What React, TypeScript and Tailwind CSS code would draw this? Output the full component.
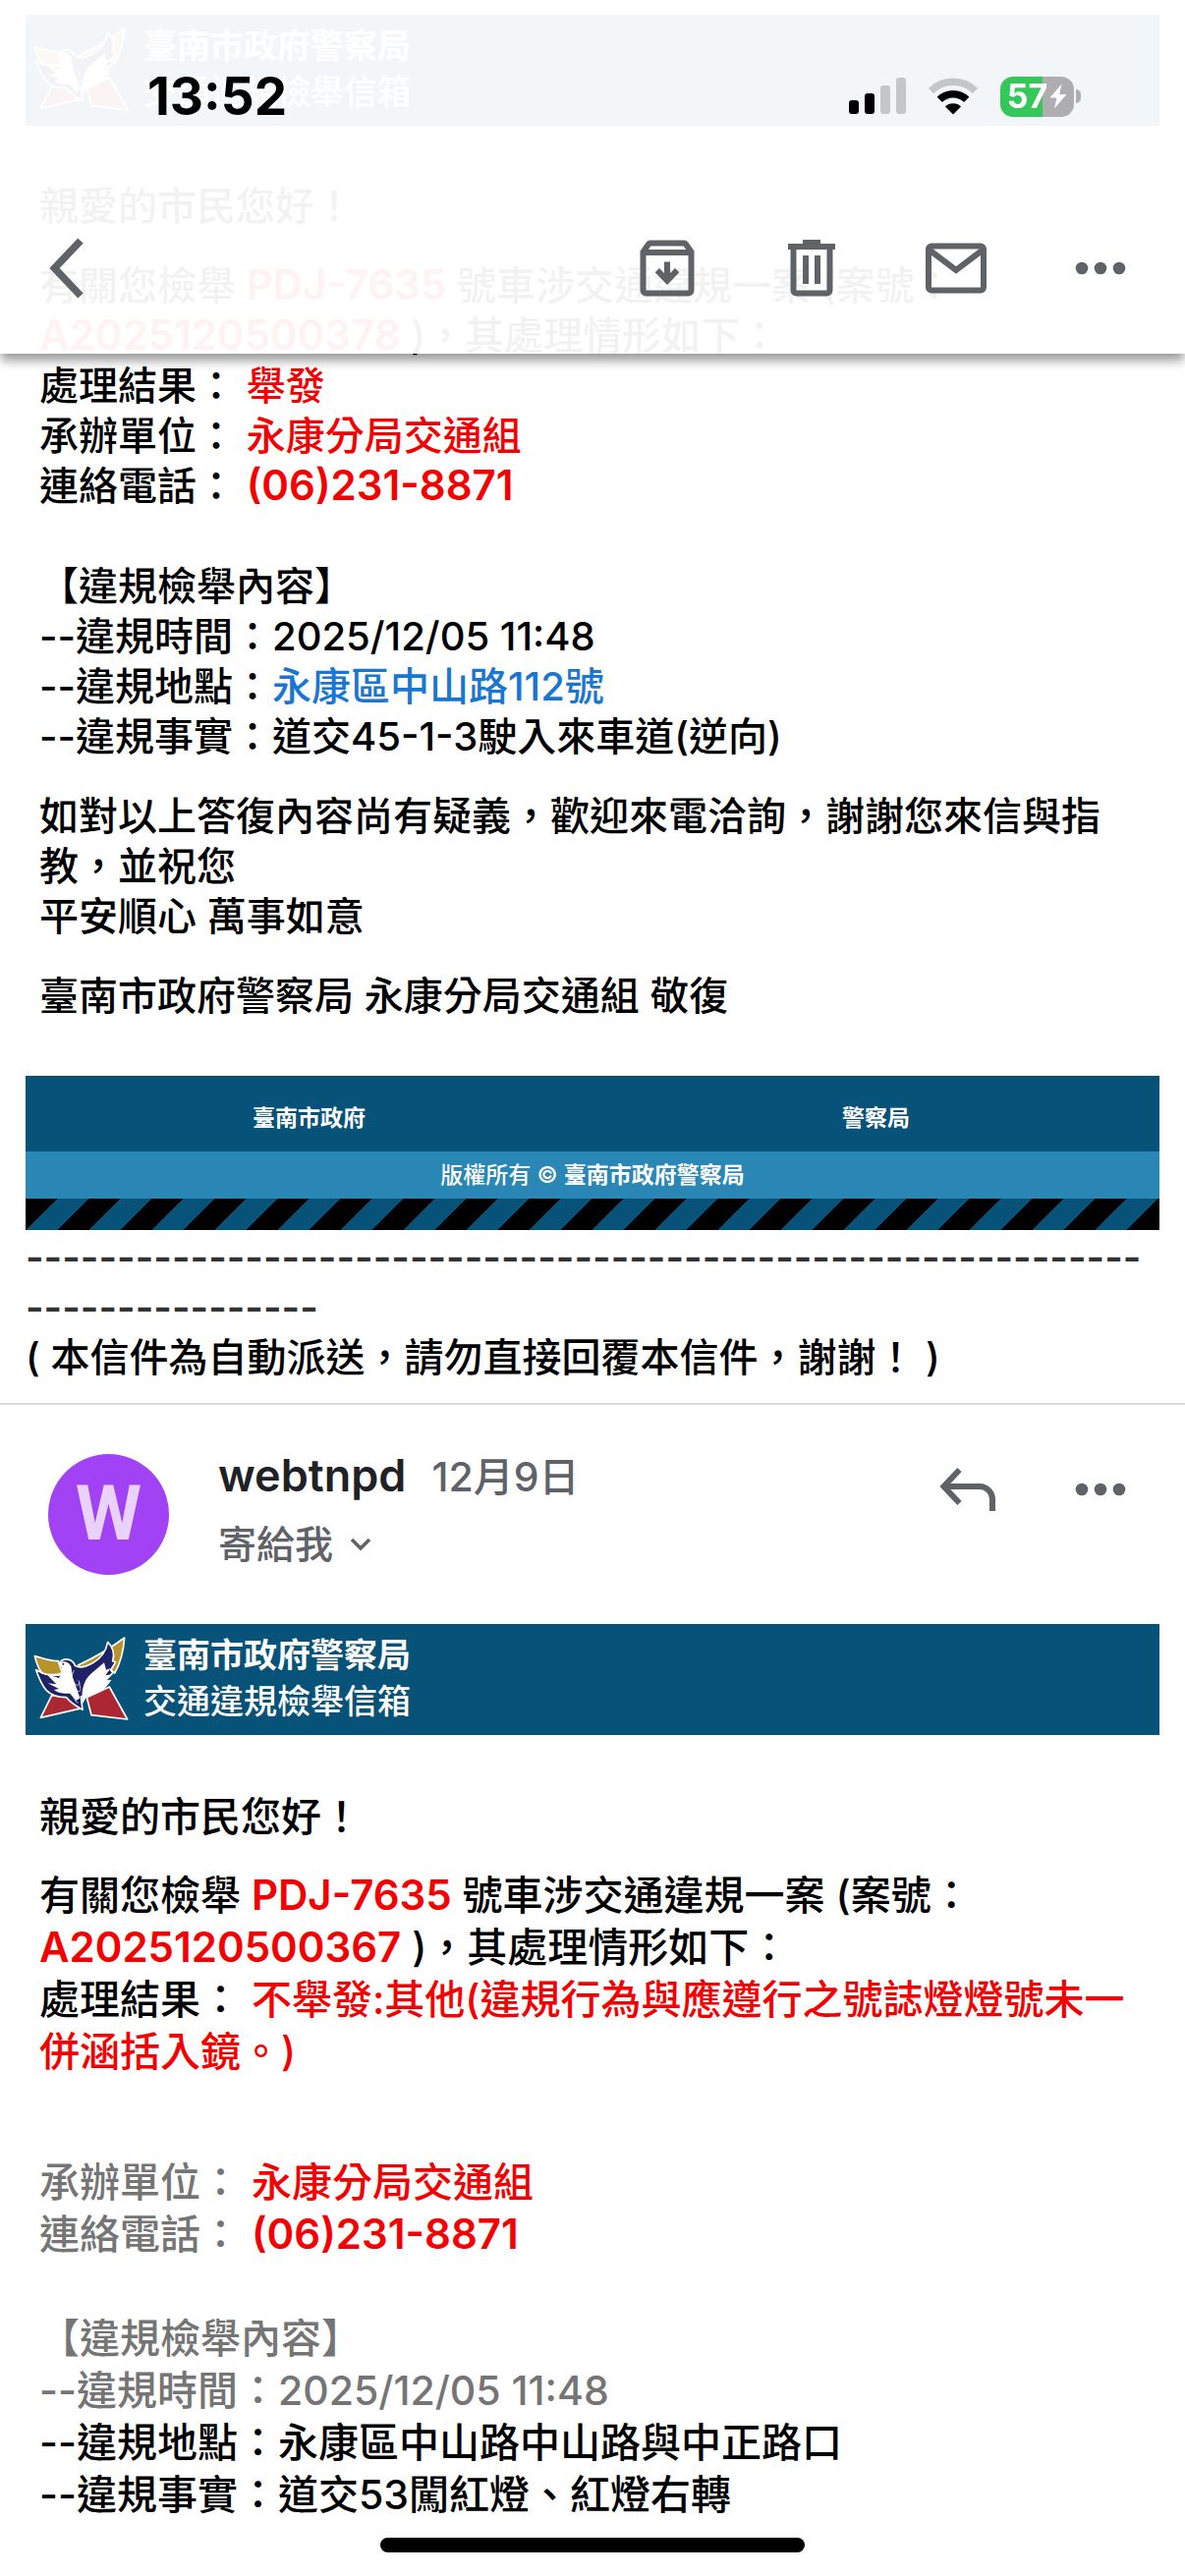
import React from "react";

const font = "font-['Inter','Noto_Sans_CJK_TC',sans-serif]";

const SignalIcon = () => (
  <svg width="58" height="38" viewBox="0 0 58 38" aria-hidden="true">
    <rect x="0" y="23" width="10" height="14" rx="3" fill="#000" />
    <rect x="16" y="16" width="10" height="21" rx="3" fill="#000" />
    <rect x="32" y="8" width="10" height="29" rx="3" fill="#c5c6c8" />
    <rect x="48" y="0" width="10" height="37" rx="3" fill="#c5c6c8" />
  </svg>
);

const WifiIcon = () => (
  <svg width="52" height="38" viewBox="0 0 52 38" aria-hidden="true">
    <path d="M3.5 13.5a32 32 0 0 1 45 0" fill="none" stroke="#c5c6c8" strokeWidth="7.5" />
    <path d="M12.3 22.3a19.5 19.5 0 0 1 27.4 0" fill="none" stroke="#000" strokeWidth="7.5" />
    <path d="M26 37.5 18 29.4a11.5 11.5 0 0 1 16 0Z" fill="#000" />
  </svg>
);

const Battery = () => (
  <div className="flex items-center gap-[2px]">
    <div className="flex h-[41px] w-[75px] items-center justify-center gap-[2px] rounded-[13px] bg-[linear-gradient(90deg,#34c759_57%,#aeaeb0_57%)] text-white">
      <span className="text-[34px] leading-none font-bold">57</span>
      <svg width="18" height="26" viewBox="0 0 18 26" aria-hidden="true">
        <path d="M12.5.5.5 14.5h7L5 25.5 17.5 11h-7.3Z" fill="#fff" />
      </svg>
    </div>
    <div className="h-[14px] w-[5px] rounded-r-full bg-[#aeaeb0]" />
  </div>
);

const BackIcon = () => (
  <svg width="36" height="62" viewBox="0 0 36 62" aria-hidden="true">
    <path d="M32 3 5.5 31 32 59" fill="none" stroke="#5f6368" strokeWidth="7.5" />
  </svg>
);

const ArchiveIcon = () => (
  <svg width="56" height="58" viewBox="0 0 56 58" aria-hidden="true">
    <path
      d="M3.5 12.5v39a3 3 0 0 0 3 3h43a3 3 0 0 0 3-3v-39L47 4.500a3 3 0 0 0-2-1H11a3 3 0 0 0-2 1ZM3 13h50"
      fill="none"
      stroke="#5f6368"
      strokeWidth="6"
    />
    <path d="M25 22.500h6v11.500l5-5 4.300 4.300L28 46 15.700 33.300 20 29l5 5Z" fill="#5f6368" />
  </svg>
);

const TrashIcon = () => (
  <svg width="50" height="58" viewBox="0 0 50 58" aria-hidden="true">
    <path d="M6.500 7v44.500a3 3 0 0 0 3 3h31a3 3 0 0 0 3-3V7" fill="none" stroke="#5f6368" strokeWidth="6" />
    <path d="M16 0h18v4h15v6H1V4h15ZM16 16h6v29h-6ZM28 16h6v29h-6Z" fill="#5f6368" />
  </svg>
);

const MailIcon = () => (
  <svg width="62" height="52" viewBox="0 0 62 52" aria-hidden="true">
    <rect x="3" y="3.500" width="56" height="45" rx="3" fill="none" stroke="#5f6368" strokeWidth="6" />
    <path d="M4 7.500 31 28 58 7.500" fill="none" stroke="#5f6368" strokeWidth="6" />
  </svg>
);

const DotsIcon = () => (
  <svg width="52" height="14" viewBox="0 0 52 14" fill="#5f6368" aria-hidden="true">
    <circle cx="7" cy="7" r="6.300" />
    <circle cx="26" cy="7" r="6.300" />
    <circle cx="45" cy="7" r="6.300" />
  </svg>
);

const ReplyIcon = () => (
  <svg width="58" height="46" viewBox="0 0 58 46" aria-hidden="true">
    <path d="M20.500 3 4.500 20l16 17M5 20h36a13 13 0 0 1 13 13v12" fill="none" stroke="#5f6368" strokeWidth="6" />
  </svg>
);

// Dove with spread wings over a red star
const PoliceLogo = () => (
  <svg className="h-[86px] w-[97px]" viewBox="40 78 291 258" aria-hidden="true">
    <g stroke="#fff" strokeWidth="5" strokeLinejoin="round">
      <path d="M96 260 62 328 188 299 178 268Z" fill="#ab2731" />
      <path d="M203 266 272 234 327 333 217 320Z" fill="#ab2731" />
      <path d="M318 84c-32 24-82 56-142 84l20 20 66-20 26 24c18-30 27-68 30-108Z" fill="#b8922a" />
      <path d="M267 97c-5 27-20 50-46 64-25 14-42 16-54 8-6-18-27-25-43-14l-12 16 16 9-4 17c-22 4-52-2-76-15 9 27 20 48 31 62 18 18 44 22 62 22 13 17 30 27 49 38l-5-40c33-5 58-22 74-48l24-26-7-7 15-25-9-3c7-20 1-43-15-58Z" fill="#1f2265" />
      <path d="M44 140c22 5 50 16 72 15l12 36c-16 8-45 8-62 0-11-12-17-30-22-51Z" fill="#b8922a" />
    </g>
    <g fill="#fff">
      <path d="M115 164c12-12 32-9 40 8l5 33 22 63-11 8-20-22c-18 2-40-3-48-11l15-3-34-17 26 3-30-31 38 12 11-20c2-5 0-15-14-23Z" />
      <path d="M189 287c-2-24-1-49 10-72 11-20 33-33 57-55l6 22 14-5-16 22 22-3-24 18 20-1c-17 28-40 44-75 50Z" />
    </g>
    <circle cx="131" cy="164" r="3" fill="#1f2265" />
    <path d="m147 206 11-8 6-15M148 218l9 36 12 24 8 5M164 221l9 10 10-9M168 235l8 14 9-5M178 214l6 27" fill="none" stroke="#fff" strokeWidth="2" />
  </svg>
);

const Banner = () => (
  <div className="flex h-[113px] items-center gap-[15px] bg-[#075278] px-2 pb-1 text-[34px] leading-[47px] text-white">
    <PoliceLogo />
    <div>
      <p className="font-bold">臺南市政府警察局</p>
      <p className="font-medium">交通違規檢舉信箱</p>
    </div>
  </div>
);

const Red: React.FC<{ children: React.ReactNode }> = ({ children }) => (
  <span className="text-[#f50000]">{children}</span>
);

// Plate, case and phone numbers
const RedCode: React.FC<{ children: React.ReactNode }> = ({ children }) => (
  <span className="text-[42px] leading-none font-semibold text-[#f50000]">{children}</span>
);

const IconButton: React.FC<{ label: string; children: React.ReactNode }> = ({ label, children }) => (
  <button type="button" aria-label={label} className="flex h-[64px] w-[64px] items-center justify-center">
    {children}
  </button>
);

const TopBar = () => (
  <header className="fixed inset-x-0 top-0 z-10 bg-white/95 pt-[78px] shadow-[0_8px_10px_-1px_rgba(0,0,0,0.4)]">
    <div className="flex h-[40px] items-center justify-between pr-[106px] pl-[150px]">
      <time className="text-[53px] leading-none font-bold text-black">13:52</time>
      <div className="flex items-center gap-[22px]">
        <SignalIcon />
        <WifiIcon />
        <Battery />
      </div>
    </div>
    <nav className="mt-[68px] flex h-[174px] items-center justify-between pr-[54px] pl-[36px]">
      <IconButton label="返回">
        <BackIcon />
      </IconButton>
      <div className="flex gap-[83px]">
        <IconButton label="封存">
          <ArchiveIcon />
        </IconButton>
        <IconButton label="刪除">
          <TrashIcon />
        </IconButton>
        <IconButton label="標示為未讀">
          <MailIcon />
        </IconButton>
        <IconButton label="更多">
          <DotsIcon />
        </IconButton>
      </div>
    </nav>
  </header>
);

const FirstMail = () => (
  <article className="px-[26px] pt-[15px] pb-[21px] text-[40px] leading-[51px] font-medium text-black">
    <Banner />
    <div className="flex flex-col gap-[30px] py-[56px] pr-[40px] pl-[14px]">
      <p>親愛的市民您好！</p>
      <p>
        有關您檢舉 <RedCode>PDJ-7635</RedCode> 號車涉交通違規一案 (案號：
        <br />
        <RedCode>A2025120500378</RedCode> )，其處理情形如下：
        <br />
        處理結果： <Red>舉發</Red>
        <br />
        承辦單位： <Red>永康分局交通組</Red>
        <br />
        連絡電話： <RedCode>(06)231-8871</RedCode>
        <br />
        <br />
        【違規檢舉內容】
        <br />
        --違規時間：2025/12/05 11:48
        <br />
        --違規地點：
        <a href="#map" className="text-[#1976d2]">
          永康區中山路112號
        </a>
        <br />
        --違規事實：道交45-1-3駛入來車道(逆向)
      </p>
      <p>
        如對以上答復內容尚有疑義，歡迎來電洽詢，謝謝您來信與指教，並祝您
        <br />
        平安順心 萬事如意
      </p>
      <p>臺南市政府警察局 永康分局交通組 敬復</p>
    </div>

    <footer className="text-[23px] leading-[30px] text-white">
      <div className="grid h-[77px] grid-cols-2 items-center bg-[#075278] pt-2 text-center font-bold">
        <span>臺南市政府</span>
        <span>警察局</span>
      </div>
      <div className="flex h-[48px] items-center justify-center bg-[#2986b5]">
        <p>
          版權所有 © <b>臺南市政府警察局</b>
        </p>
      </div>
      <div className="h-[32px] bg-[linear-gradient(135deg,#000_25%,#075278_25%,#075278_50%,#000_50%,#000_75%,#075278_75%)] bg-[size:64px_64px]" />
    </footer>

    <p className="pt-[2px] font-semibold break-all text-[#333]">{"-".repeat(77)}</p>
    <p>( 本信件為自動派送，請勿直接回覆本信件，謝謝！ )</p>
  </article>
);

const MailHeader = () => (
  <div className="flex h-[223px] items-start justify-between pt-[50px] pr-[54px] pl-[49px]">
    <div className="flex gap-[50px]">
      <div className="flex h-[123px] w-[123px] items-center justify-center rounded-full bg-[#a142f4] font-['Roboto',sans-serif] text-[77px] leading-none font-bold text-[#e9d2fd]">
        W
      </div>
      <div className="text-[#5f6368]">
        <p className="flex items-baseline gap-[26px] text-[41px] leading-[44px]">
          <span className="text-[45px] font-semibold text-[#202124]">webtnpd</span>
          <time>12月9日</time>
        </p>
        <button type="button" className="mt-[22px] flex items-center gap-[17px] text-[39px] leading-[50px]">
          寄給我
          <svg width="22" height="14" viewBox="0 0 22 14" aria-hidden="true">
            <path d="m2 2 9 9 9-9" fill="none" stroke="#5f6368" strokeWidth="3.500" />
          </svg>
        </button>
      </div>
    </div>
    <div className="flex gap-[71px] pt-[4px]">
      <IconButton label="回覆">
        <ReplyIcon />
      </IconButton>
      <IconButton label="更多">
        <DotsIcon />
      </IconButton>
    </div>
  </div>
);

const SecondMail = () => (
  <article className="border-t-2 border-[#dadce0] text-[41px] leading-[53px] font-medium text-black">
    <MailHeader />
    <div className="px-[26px]">
      <Banner />
      <div className="flex flex-col gap-[27px] px-[14px] pt-[57px] pb-[54px]">
        <p>親愛的市民您好！</p>
        <p>
          有關您檢舉 <RedCode>PDJ-7635</RedCode> 號車涉交通違規一案 (案號：
          <br />
          <RedCode>A2025120500367</RedCode> )，其處理情形如下：
          <br />
          處理結果： <Red>不舉發:其他(違規行為與應遵行之號誌燈燈號未一併涵括入鏡。)</Red>
        </p>
        <p className="pt-[53px]">
          <span className="text-[#757575]">承辦單位：</span> <Red>永康分局交通組</Red>
          <br />
          <span className="text-[#757575]">連絡電話：</span> <RedCode>(06)231-8871</RedCode>
          <br />
          <br />
          <span className="text-[#757575]">
            【違規檢舉內容】
            <br />
            --違規時間：2025/12/05 11:48
          </span>
          <br />
          --違規地點：永康區中山路中山路與中正路口
          <br />
          --違規事實：道交53闖紅燈、紅燈右轉
        </p>
      </div>
    </div>
  </article>
);

const App: React.FC = () => (
  <main lang="zh-Hant-TW" className={`${font} bg-white`}>
    <TopBar />
    <FirstMail />
    <SecondMail />
    {/* Home indicator */}
    <div className="fixed bottom-[24px] left-1/2 z-10 h-[15px] w-[432px] -translate-x-1/2 rounded-full bg-black" />
  </main>
);

export default App;
